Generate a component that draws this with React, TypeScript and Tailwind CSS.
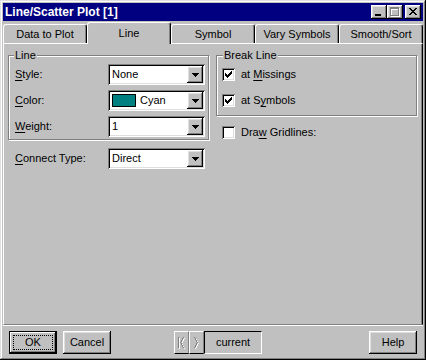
import type { ReactNode } from 'react'

const RAISED = 'shadow-[inset_-1px_-1px_0_#000,inset_1px_1px_0_#fff,inset_-2px_-2px_0_#808080,inset_2px_2px_0_#dfdfdf]'
const SUNKEN = 'shadow-[inset_1px_1px_0_#808080,inset_-1px_-1px_0_#fff,inset_2px_2px_0_#000,inset_-2px_-2px_0_#dfdfdf]'
const ETCHED = 'border border-[#808080] shadow-[inset_1px_1px_0_#fff,1px_1px_0_#fff]'

const TABS = ['Data to Plot', 'Line', 'Symbol', 'Vary Symbols', 'Smooth/Sort']

function Key({ children }: { children: ReactNode }) {
  return <span className="underline underline-offset-[2px]">{children}</span>
}

function DownArrow() {
  return (
    <svg width="7" height="4" viewBox="0 0 7 4" shapeRendering="crispEdges">
      <path d="M0 0h7v1H0zM1 1h5v1H1zM2 2h3v1H2zM3 3h1v1H3z" fill="#000" />
    </svg>
  )
}

function Combo({ children }: { children: ReactNode }) {
  return (
    <div className={`w-[97px] h-[21px] bg-white p-[2px] flex ${SUNKEN}`}>
      <div className="flex-1 min-w-0 flex items-center gap-[4px] pl-[2px]">{children}</div>
      <div className={`w-[16px] h-[17px] bg-[#c0c0c0] flex items-center justify-center ${RAISED}`}>
        <DownArrow />
      </div>
    </div>
  )
}

function CheckBox({ on }: { on?: boolean }) {
  return (
    <div className={`w-[13px] h-[13px] shrink-0 bg-white flex items-center justify-center ${SUNKEN}`}>
      {on && (
        <svg width="7" height="7" viewBox="0 0 7 7" shapeRendering="crispEdges">
          <path
            d="M6 0h1v1H6zM5 1h2v1H5zM0 2h1v1H0zM4 2h3v1H4zM0 3h2v1H0zM3 3h3v1H3zM0 4h5v1H0zM1 5h3v1H1zM2 6h1v1H2z"
            fill="#000"
          />
        </svg>
      )}
    </div>
  )
}

function Field({ label, children }: { label: ReactNode; children: ReactNode }) {
  return (
    <div className="flex items-center h-[21px]">
      <div className="w-[93px]">{label}</div>
      <Combo>{children}</Combo>
    </div>
  )
}

function CheckRow({ on, children }: { on?: boolean; children: ReactNode }) {
  return (
    <div className="flex items-center h-[21px] gap-[6px]">
      <CheckBox on={on} />
      <span>{children}</span>
    </div>
  )
}

function TitleButton({ children }: { children: ReactNode }) {
  return (
    <div className={`w-[16px] h-[14px] bg-[#c0c0c0] ${RAISED}`}>
      <svg width="16" height="14" viewBox="0 0 16 14" shapeRendering="crispEdges">
        {children}
      </svg>
    </div>
  )
}

function Button({ children }: { children: ReactNode }) {
  return (
    <div className={`w-[48px] h-[23px] bg-[#c0c0c0] flex items-center justify-center ${RAISED}`}>
      {children}
    </div>
  )
}

export default function App() {
  return (
    <div
      className={`w-[426px] h-[360px] bg-[#c0c0c0] p-[3px] flex flex-col text-black text-[11px] leading-[13px] font-['Liberation_Sans',Arial,sans-serif] shadow-[inset_-1px_-1px_0_#000,inset_1px_1px_0_#dfdfdf,inset_-2px_-2px_0_#808080,inset_2px_2px_0_#fff]`}
    >
      {/* Title bar */}
      <div className="h-[18px] bg-[#000080] flex items-center pl-[2px] pr-[2px]">
        <span className="text-white font-bold text-[12px]">Line/Scatter Plot [1]</span>
        <div className="ml-auto flex">
          <TitleButton>
            <path d="M4 9h6v2H4z" fill="#000" />
          </TitleButton>
          <TitleButton>
            <path d="M4 3h9v2H4zM4 5h1v6H4zM12 5h1v6h-1zM4 11h9v1H4z" fill="#fff" />
            <path d="M3 2h9v2H3zM3 4h1v6H3zM11 4h1v6h-1zM3 10h9v1H3z" fill="#808080" />
          </TitleButton>
          <div className="w-[2px]" />
          <TitleButton>
            <path
              d="M4 3h2v1H4zM10 3h2v1h-2zM5 4h2v1H5zM9 4h2v1H9zM6 5h4v1H6zM7 6h2v1H7zM6 7h4v1H6zM5 8h2v1H5zM9 8h2v1H9zM4 9h2v1H4zM10 9h2v1h-2z"
              fill="#000"
            />
          </TitleButton>
        </div>
      </div>

      {/* Tabs */}
      <div className="h-[22px] flex items-end">
        {TABS.map((t) =>
          t === 'Line' ? (
            <div
              key={t}
              className="flex-1 h-[22px] -mb-px relative z-10 bg-[#c0c0c0] flex items-center justify-center border-t border-l border-white border-r border-r-black rounded-t-[3px] shadow-[inset_-1px_0_0_#808080]"
            >
              {t}
            </div>
          ) : (
            <div
              key={t}
              className="flex-1 h-[19px] flex items-center justify-center border-t border-l border-white border-r border-r-black rounded-t-[3px] shadow-[inset_-1px_0_0_#808080]"
            >
              {t}
            </div>
          )
        )}
      </div>

      {/* Panel */}
      <div className="flex-1 flex gap-[7px] pt-[11px] pl-[4px] border border-t-white border-l-white border-r-black border-b-[#808080] shadow-[inset_-1px_0_0_#808080,0_1px_0_#fff]">
        {/* Left column */}
        <div className="w-[201px] flex flex-col">
          <div className={`relative pt-[8px] pb-[2px] pl-[6px] pr-[3px] flex flex-col gap-[5px] ${ETCHED}`}>
            <span className="absolute -top-[7px] left-[5px] bg-[#c0c0c0] px-px leading-[13px]">Line</span>
            <Field label={<><Key>S</Key>tyle:</>}>
              <span>None</span>
            </Field>
            <Field label={<><Key>C</Key>olor:</>}>
              <span className="w-[24px] h-[13px] bg-[#008080] border border-black shrink-0" />
              <span>Cyan</span>
            </Field>
            <Field label={<><Key>W</Key>eight:</>}>
              <span>1</span>
            </Field>
          </div>
          <div className="mt-[8px] pl-[7px]">
            <Field label={<><Key>C</Key>onnect Type:</>}>
              <span>Direct</span>
            </Field>
          </div>
        </div>

        {/* Right column */}
        <div className="w-[201px] flex flex-col">
          <div className={`relative pt-[8px] pb-[4px] pl-[5px] flex flex-col gap-[5px] ${ETCHED}`}>
            <span className="absolute -top-[7px] left-[6px] bg-[#c0c0c0] px-px leading-[13px]">Break Line</span>
            <CheckRow on>
              at <Key>M</Key>issings
            </CheckRow>
            <CheckRow on>
              at S<Key>y</Key>mbols
            </CheckRow>
          </div>
          <div className="mt-[6px] pl-[6px]">
            <CheckRow>
              Dra<Key>w</Key> Gridlines:
            </CheckRow>
          </div>
        </div>
      </div>

      {/* Bottom buttons */}
      <div className="mt-[6px] mb-[3px] h-[23px] flex items-center pl-[6px] pr-[6px]">
        <div className="w-[48px] h-[23px] border border-black p-[3px] flex shadow-[inset_-1px_-1px_0_#000,inset_1px_1px_0_#fff,inset_-2px_-2px_0_#808080]">
          <div className="flex-1 border border-dotted border-black flex items-center justify-center">OK</div>
        </div>
        <div className="ml-[6px]">
          <Button>Cancel</Button>
        </div>

        <div className="ml-[63px] flex h-[23px]">
          <div className="w-[15px] h-[23px] flex items-center justify-center border-t border-l border-white border-r border-r-[#808080] border-b border-b-black">
            <svg width="9" height="12" viewBox="0 0 9 12" shapeRendering="crispEdges">
              <path d="M2 1h1v11H2zM7 1h1v1H7zM6 2h1v2H6zM5 4h1v2H5zM4 6h1v1H4zM5 7h1v2H5zM6 9h1v2H6zM7 11h1v1H7z" fill="#fff" />
              <path d="M1 0h1v11H1zM6 0h1v1H6zM5 1h1v2H5zM4 3h1v2H4zM3 5h1v1H3zM4 6h1v2H4zM5 8h1v2H5zM6 10h1v1H6z" fill="#808080" />
            </svg>
          </div>
          <div className="w-[15px] h-[23px] flex items-center justify-center border-t border-l border-white border-r border-r-[#808080] border-b border-b-black">
            <svg width="6" height="12" viewBox="0 0 6 12" shapeRendering="crispEdges">
              <path d="M1 1h1v1H1zM2 2h1v2H2zM3 4h1v2H3zM4 6h1v1H4zM3 7h1v2H3zM2 9h1v2H2zM1 11h1v1H1z" fill="#fff" />
              <path d="M0 0h1v1H0zM1 1h1v2H1zM2 3h1v2H2zM3 5h1v1H3zM2 6h1v2H2zM1 8h1v2H1zM0 10h1v1H0z" fill="#808080" />
            </svg>
          </div>
          <div className="w-[58px] h-[23px] flex items-center justify-center border-t border-l border-black border-r border-b border-r-white border-b-white">
            current
          </div>
        </div>

        <div className="ml-auto">
          <Button>Help</Button>
        </div>
      </div>
    </div>
  )
}
